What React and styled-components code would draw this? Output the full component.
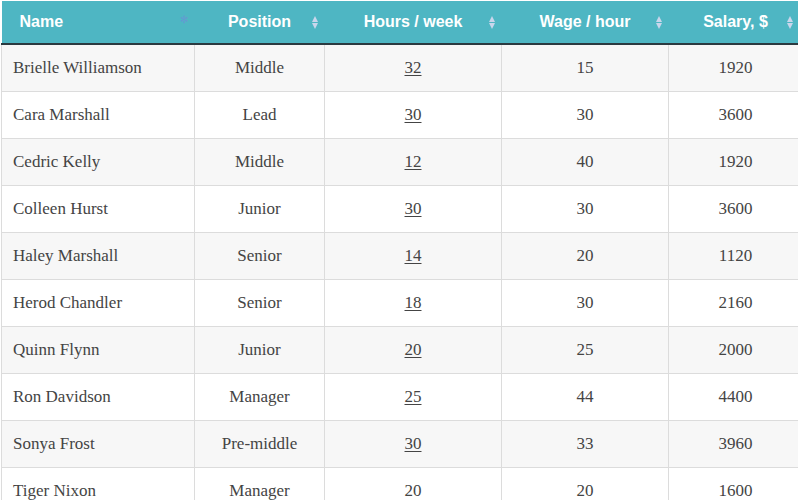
import React from 'react';
import styled, { createGlobalStyle } from 'styled-components';

const GlobalStyle = createGlobalStyle`
  html, body {
    margin: 0;
    background: #fff;
    overflow: hidden;
  }
`;

const Wrap = styled.div`
  padding: 1px 0 0 1px;
  width: 802px;
`;

const Table = styled.table`
  border-collapse: collapse;
  table-layout: fixed;
  width: 801px;
`;

const HeadCell = styled.th`
  background: #4eb6c3;
  color: #fff;
  font-family: 'Liberation Sans', Arial, sans-serif;
  font-weight: bold;
  font-size: 16px;
  height: 42px;
  padding: 0;
  border-bottom: 2px solid #2b3a40;
  text-align: ${(p) => (p.$left ? 'left' : 'center')};
  padding-left: ${(p) => (p.$left ? '18px' : '0')};
  position: relative;
`;

const SortIcon = styled.span`
  position: absolute;
  right: ${(p) => p.$right}px;
  top: 14px;
  width: 8px;
  height: 15px;
  display: flex;
  flex-direction: column;
  align-items: center;
  justify-content: center;
  gap: 1px;
  &::before,
  &::after {
    content: '';
    width: 0;
    height: 0;
    border-left: 3.5px solid transparent;
    border-right: 3.5px solid transparent;
  }
  &::before {
    border-bottom: 6px solid #c9d6ec;
  }
  &::after {
    border-top: 6px solid #c9d6ec;
  }
`;

const ActiveDot = styled.span`
  position: absolute;
  right: 6px;
  top: 13px;
  color: #6f8fd9;
  font-size: 10px;
  font-family: 'DejaVu Sans', sans-serif;
  opacity: 0.7;
`;

const Row = styled.tr`
  background: ${(p) => (p.$odd ? '#f7f7f7' : '#ffffff')};
`;

const Cell = styled.td`
  height: 46px;
  padding: 0;
  border: 1px solid #dcdcdc;
  border-top: none;
  font-family: 'Liberation Serif', 'Times New Roman', serif;
  font-size: 17px;
  color: #444;
  text-align: ${(p) => (p.$left ? 'left' : 'center')};
  padding-left: ${(p) => (p.$left ? '11px' : '0')};
`;

const Hours = styled.span`
  text-decoration: ${(p) => (p.$plain ? 'none' : 'underline')};
  text-underline-offset: 2px;
`;

const cols = [
  { title: 'Name', w: 193, left: true },
  { title: 'Position', w: 130, icon: 6 },
  { title: 'Hours / week', w: 177, icon: 6 },
  { title: 'Wage / hour', w: 167, icon: 6 },
  { title: 'Salary, $', w: 134, icon: 9 },
];

const rows = [
  ['Brielle Williamson', 'Middle', 32, 15, 1920],
  ['Cara Marshall', 'Lead', 30, 30, 3600],
  ['Cedric Kelly', 'Middle', 12, 40, 1920],
  ['Colleen Hurst', 'Junior', 30, 30, 3600],
  ['Haley Marshall', 'Senior', 14, 20, 1120],
  ['Herod Chandler', 'Senior', 18, 30, 2160],
  ['Quinn Flynn', 'Junior', 20, 25, 2000],
  ['Ron Davidson', 'Manager', 25, 44, 4400],
  ['Sonya Frost', 'Pre-middle', 30, 33, 3960],
  ['Tiger Nixon', 'Manager', 20, 20, 1600],
];

export default function App() {
  return (
    <>
      <GlobalStyle />
      <Wrap>
        <Table>
          <colgroup>
            {cols.map((c) => (
              <col key={c.title} style={{ width: c.w }} />
            ))}
          </colgroup>
          <thead>
            <tr>
              {cols.map((c) => (
                <HeadCell key={c.title} $left={c.left}>
                  {c.title}
                  {c.left ? <ActiveDot>✻</ActiveDot> : <SortIcon $right={c.icon} />}
                </HeadCell>
              ))}
            </tr>
          </thead>
          <tbody>
            {rows.map((r, i) => (
              <Row key={r[0]} $odd={i % 2 === 0}>
                <Cell $left>{r[0]}</Cell>
                <Cell>{r[1]}</Cell>
                <Cell>
                  <Hours $plain={i === rows.length - 1}>{r[2]}</Hours>
                </Cell>
                <Cell>{r[3]}</Cell>
                <Cell>{r[4]}</Cell>
              </Row>
            ))}
          </tbody>
        </Table>
      </Wrap>
    </>
  );
}
